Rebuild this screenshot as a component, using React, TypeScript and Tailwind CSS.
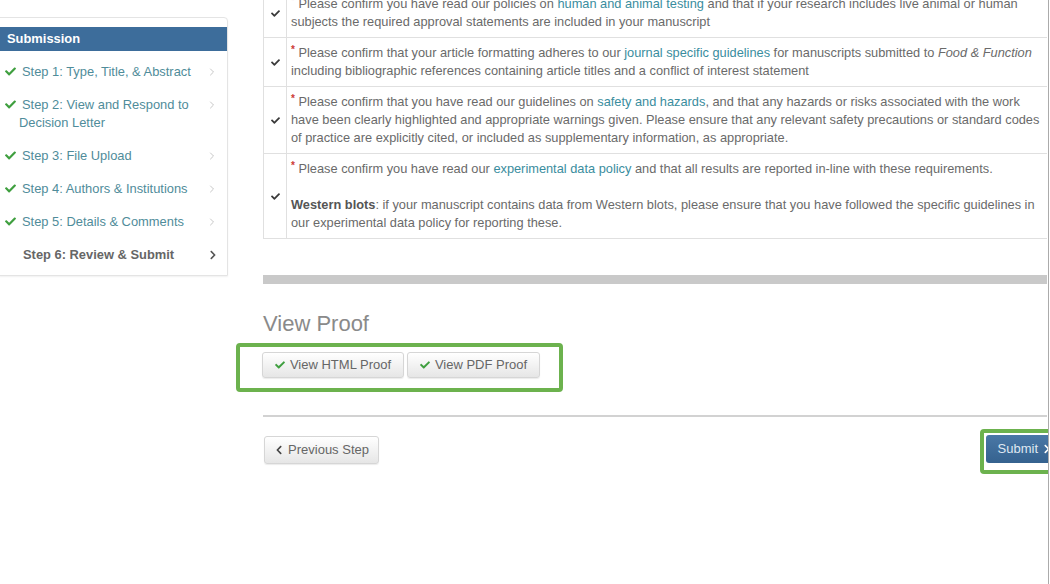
import { FaCheck, FaChevronLeft, FaChevronRight } from 'react-icons/fa'
import { ChevronRight } from 'lucide-react'

const steps = [
    { lines: ['Step 1: Type, Title, & Abstract'], done: true },
    { lines: ['Step 2: View and Respond to', 'Decision Letter'], done: true },
    { lines: ['Step 3: File Upload'], done: true },
    { lines: ['Step 4: Authors & Institutions'], done: true },
    { lines: ['Step 5: Details & Comments'], done: true },
    { lines: ['Step 6: Review & Submit'], done: false },
]

function Req() {
    return <span className="relative -top-[4px] text-[10px] leading-[0] font-bold text-[#cc3a35]">*</span>
}

function A({ children }: { children: React.ReactNode }) {
    return <span className="text-[#3a8d9e]">{children}</span>
}

function Row({ children }: { children: React.ReactNode }) {
    return (
        <div className="flex border-b border-[#e0e0e0]">
            <div className="flex w-[23px] shrink-0 items-center justify-center border-r border-[#e0e0e0]">
                <FaCheck className="text-[9px] text-[#3a3a3a]" />
            </div>
            <div className="flex-1 py-[6px] pl-[4px] whitespace-nowrap">{children}</div>
        </div>
    )
}

export default function App() {
    return (
        <div className="h-[584px] w-[1050px] overflow-hidden bg-white font-['Liberation_Sans',Arial,sans-serif] text-[12.8px] leading-[18px] text-[#6a6a6a]">
            <div className="flex h-full w-[1049px] overflow-hidden border-r border-[#ababab]">
                {/* Sidebar */}
                <aside className="mt-[17px] -ml-[1px] w-[229px] shrink-0 self-start rounded-tr-[4px] border border-[#e4e4e4] pt-[9px] pb-[4px] text-[12.9px] shadow-[0_1px_2px_rgba(0,0,0,0.06)]">
                    <div className="h-[24px] bg-[#3d6d9b] pl-[7px] leading-[24px] font-bold text-white">
                        Submission
                    </div>
                    <ul className="pt-[4px]">
                        {steps.map((s) => (
                            <li
                                key={s.lines[0]}
                                className="flex items-start justify-between py-[7.5px] pr-[9px]"
                            >
                                <div
                                    className={
                                        s.done
                                            ? 'pl-[19px] -indent-[14px] whitespace-nowrap text-[#4f8c9a]'
                                            : 'pl-[23px] font-bold whitespace-nowrap text-[#666]'
                                    }
                                >
                                    {s.done && (
                                        <FaCheck className="mr-[6px] inline-block align-[-1px] text-[11px] text-[#3f9f3f]" />
                                    )}
                                    {s.lines.map((l, i) => (
                                        <span key={l}>
                                            {i > 0 && <br />}
                                            {l}
                                        </span>
                                    ))}
                                </div>
                                <div className="flex h-[18px] items-center">
                                    {s.done ? (
                                        <ChevronRight size={12} strokeWidth={1.8} className="text-[#c0c0c0]" />
                                    ) : (
                                        <FaChevronRight className="text-[10px] text-[#555]" />
                                    )}
                                </div>
                            </li>
                        ))}
                    </ul>
                </aside>

                {/* Main */}
                <main className="ml-[35px] flex w-[784px] shrink-0 flex-col">
                    <div className="-mt-[11px] border-l border-[#e0e0e0]">
                        <Row>
                            <Req /> Please confirm you have read our policies on{' '}
                            <A>human and animal testing</A> and that if your research includes live animal or human
                            <br />
                            subjects the required approval statements are included in your manuscript
                        </Row>
                        <Row>
                            <Req /> Please confirm that your article formatting adheres to our{' '}
                            <A>journal specific guidelines</A> for manuscripts submitted to <i>Food &amp; Function</i>
                            <br />
                            including bibliographic references containing article titles and a conflict of interest statement
                        </Row>
                        <Row>
                            <Req /> Please confirm that you have read our guidelines on <A>safety and hazards</A>, and
                            that any hazards or risks associated with the work
                            <br />
                            have been clearly highlighted and appropriate warnings given. Please ensure that any
                            relevant safety precautions or standard codes
                            <br />
                            of practice are explicitly cited, or included as supplementary information, as appropriate.
                        </Row>
                        <Row>
                            <Req /> Please confirm you have read our <A>experimental data policy</A> and that all
                            results are reported in-line with these requirements.
                            <p className="mt-[18px]">
                                <b className="text-[#555]">Western blots</b>: if your manuscript contains data from
                                Western blots, please ensure that you have followed the specific guidelines in
                                <br />
                                our experimental data policy for reporting these.
                            </p>
                        </Row>
                    </div>

                    <div className="mt-[36px] h-[9px] bg-[#c9c9c9]" />

                    <h3 className="mt-[28px] text-[22px] leading-[24px] text-[#8a8a8a]">View Proof</h3>

                    <div className="mt-[7px] -ml-[27px] flex h-[49px] w-[327px] items-start gap-[3px] rounded-[4px] border-4 border-[#6cb24e] pt-[5px] pl-[22px]">
                        <button className="flex h-[26px] w-[142px] items-center justify-center gap-[5px] rounded-[3px] border border-[#d6d6d6] bg-gradient-to-b from-white to-[#e6e6e6] text-[13px] text-[#666] shadow-[0_1px_1px_rgba(0,0,0,0.08)]">
                            <FaCheck className="text-[10px] text-[#3f9f3f]" />
                            View HTML Proof
                        </button>
                        <button className="flex h-[26px] w-[133px] items-center justify-center gap-[5px] rounded-[3px] border border-[#d6d6d6] bg-gradient-to-b from-white to-[#e6e6e6] text-[13px] text-[#666] shadow-[0_1px_1px_rgba(0,0,0,0.08)]">
                            <FaCheck className="text-[10px] text-[#3f9f3f]" />
                            View PDF Proof
                        </button>
                    </div>

                    <div className="mt-[23px] h-[2px] bg-[#d2d2d2]" />

                    <div className="mt-[12px] flex items-start">
                        <button className="mt-[7px] ml-[1px] flex h-[28px] w-[115px] items-center justify-center gap-[4px] rounded-[3px] border border-[#d6d6d6] bg-gradient-to-b from-white to-[#e6e6e6] text-[13px] text-[#666] shadow-[0_1px_1px_rgba(0,0,0,0.08)]">
                            <FaChevronLeft className="text-[10px] text-[#444]" />
                            Previous Step
                        </button>
                        <div className="-mr-[23px] ml-auto rounded-[4px] border-4 border-[#6cb24e] pt-[2px] pr-[2px] pb-[7px] pl-[2px]">
                            <button className="flex h-[28px] items-center gap-[4px] rounded-[3px] bg-gradient-to-b from-[#4a78a6] to-[#35628f] pr-[12px] pl-[12px] text-[13px] text-[#dfe8f2]">
                                Submit
                                <FaChevronRight className="text-[10px] text-white" />
                            </button>
                        </div>
                    </div>
                </main>
            </div>
        </div>
    )
}
